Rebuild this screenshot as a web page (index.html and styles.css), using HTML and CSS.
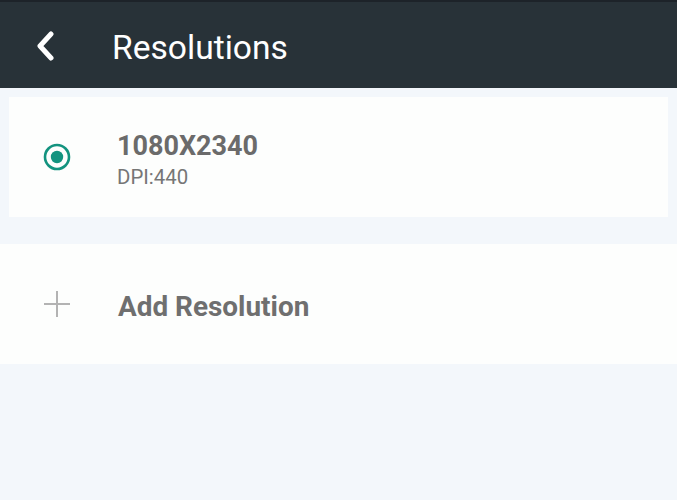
FILE: index.html
```html
<!DOCTYPE html>
<html lang="en">
<head>
<meta charset="utf-8">
<title>Resolutions</title>
<link rel="stylesheet" href="styles.css">
</head>
<body>
<div class="status"></div>
<header class="appbar">
  <svg class="back" width="18" height="30" viewBox="0 0 18 30" aria-hidden="true">
    <path d="M15 3 L4 15 L15 27" fill="none" stroke="#ffffff" stroke-width="5" stroke-linecap="round" stroke-linejoin="round"/>
  </svg>
  <h1 class="title">Resolutions</h1>
</header>
<main class="content">
  <section class="card selected">
    <svg class="radio" width="28" height="28" viewBox="0 0 28 28" aria-hidden="true">
      <circle cx="14" cy="14" r="12" fill="none" stroke="#13937f" stroke-width="2.6"/>
      <circle cx="14" cy="14" r="6.2" fill="#13937f"/>
    </svg>
    <div class="info">
      <div class="res">1080X2340</div>
      <div class="dpi">DPI:440</div>
    </div>
  </section>
  <section class="card add">
    <svg class="plus" width="28" height="28" viewBox="0 0 28 28" aria-hidden="true">
      <path d="M14 1 V27 M1 14 H27" fill="none" stroke="#b3b3b3" stroke-width="2"/>
    </svg>
    <div class="add-label">Add Resolution</div>
  </section>
</main>
</body>
</html>
```
FILE: styles.css
```css
html, body {
  margin: 0;
  padding: 0;
}
body {
  width: 677px;
  height: 500px;
  background: #f3f7fb;
  font-family: Roboto, "Liberation Sans", Arial, sans-serif;
  overflow: hidden;
}
.status {
  height: 2px;
  background: #1d2329;
}
.appbar {
  height: 86px;
  background: #283238;
  display: flex;
  align-items: center;
  padding-left: 36px;
  box-sizing: border-box;
}
.back {
  display: block;
  margin-top: 1px;
}
.title {
  margin: 0 0 0 58px;
  font-size: 33.6px;
  font-weight: 400;
  color: #ffffff;
  line-height: 38px;
  padding-top: 6px;
}
.content {
  padding-top: 9px;
}
.card {
  height: 120px;
  background: #fdfefd;
  display: flex;
  align-items: center;
  box-sizing: border-box;
}
.selected {
  margin: 0 9px;
  padding-left: 34px;
}
.radio {
  display: block;
  flex: none;
}
.info {
  margin-left: 46px;
  padding-top: 4px;
}
.res {
  font-size: 27px;
  font-weight: 700;
  color: #6b6b6b;
  line-height: 36px;
}
.dpi {
  font-size: 20.4px;
  font-weight: 400;
  color: #767676;
  line-height: 27px;
}
.add {
  margin-top: 27px;
  padding-left: 43px;
}
.plus {
  display: block;
  flex: none;
}
.add-label {
  margin-left: 47px;
  font-size: 27.9px;
  font-weight: 700;
  color: #6f6f6f;
  line-height: 36px;
  padding-top: 5px;
}
```
